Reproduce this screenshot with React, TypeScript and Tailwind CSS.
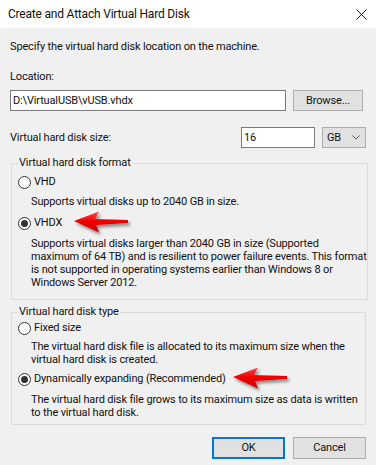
import React from 'react';

const font = "font-['Roboto',sans-serif]";

const Radio: React.FC<{ checked?: boolean; label: string }> = ({ checked = false, label }) => (
  <div className="flex items-center h-[16px] pl-[6px]">
    <span className="w-[13px] h-[13px] rounded-full border border-[#333] bg-white flex items-center justify-center">
      {checked && <span className="w-[7px] h-[7px] rounded-full bg-[#333]" />}
    </span>
    <span className="ml-[3px]">{label}</span>
  </div>
);

// red callout arrow pointing left, as drawn over the screenshot
const Arrow: React.FC<{ className: string }> = ({ className }) => (
  <svg className={className} width="64" height="30" viewBox="0 0 64 30">
    <defs>
      <linearGradient id="arrowFill" x1="0" y1="0" x2="0" y2="1">
        <stop offset="0" stopColor="#ff4a4a" />
        <stop offset="0.45" stopColor="#f20000" />
        <stop offset="1" stopColor="#c40000" />
      </linearGradient>
      <filter id="arrowShadow" x="-20%" y="-30%" width="150%" height="180%">
        <feDropShadow dx="2" dy="2.5" stdDeviation="1.6" floodColor="#000" floodOpacity="0.45" />
      </filter>
    </defs>
    <path
      d="M2 11 L27 1.5 L23 9 L56 10 L56 13 L24 15 L27 22.5 Z"
      fill="url(#arrowFill)"
      filter="url(#arrowShadow)"
    />
  </svg>
);

export default function App() {
  return (
    <div className={`w-[376px] h-[465px] overflow-hidden bg-[#f0f0f0] text-[11px] tracking-[-0.15px] leading-[16px] text-[#111] ${font}`}>
      {/* title bar */}
      <div className="h-[28px] bg-white flex items-center justify-between pl-[8px] pr-[8px] text-[12px] tracking-[-0.2px]">
        <span>Create and Attach Virtual Hard Disk</span>
        <svg width="11" height="11" viewBox="0 0 11 11" className="mr-[1px]">
          <path d="M0.5 0.5 L10.5 10.5 M10.5 0.5 L0.5 10.5" stroke="#111" strokeWidth="1" />
        </svg>
      </div>

      <div className="flex flex-col pl-[10px] pr-[10px]">
        <div className="mt-[11px]">Specify the virtual hard disk location on the machine.</div>
        <div className="mt-[14px]">Location:</div>
        <div className="mt-[5px] flex items-center">
          <div className="w-[276px] h-[21px] border border-[#7a7a7a] bg-white flex items-center px-[2px]">
            D:\VirtualUSB\vUSB.vhdx
          </div>
          <button className="ml-[7px] w-[70px] h-[21px] border border-[#adadad] bg-[#e1e1e1] flex items-center justify-center">
            Browse...
          </button>
        </div>

        <div className="mt-[16px] flex items-center h-[21px]">
          <span className="flex-1">Virtual hard disk size:</span>
          <div className="w-[74px] h-[21px] border border-[#7a7a7a] bg-white flex items-center px-[2px]">16</div>
          <div className="ml-[7px] w-[44px] h-[21px] border border-[#adadad] bg-[#e1e1e1] flex items-center justify-between pl-[4px] pr-[5px]">
            <span>GB</span>
            <svg width="8" height="5" viewBox="0 0 8 5">
              <path d="M0.5 0.5 L4 4 L7.5 0.5" fill="none" stroke="#555" strokeWidth="1" />
            </svg>
          </div>
        </div>

        <fieldset className="mt-[7px] ml-[1px] border border-[#dcdcdc] pb-[10px] leading-[13px]">
          <legend className="ml-[6px] px-[1px] leading-[16px]">Virtual hard disk format</legend>
          <div className="mt-[3px] leading-[16px]">
            <Radio label="VHD" />
          </div>
          <div className="pl-[19px] mt-[5px] whitespace-nowrap">Supports virtual disks up to 2040 GB in size.</div>
          <div className="relative mt-[7px] leading-[16px]">
            <Radio checked label="VHDX" />
            <Arrow className="absolute left-[60px] top-[-5px]" />
          </div>
          <div className="pl-[19px] mt-[6px] whitespace-nowrap">
            Supports virtual disks larger than 2040 GB in size (Supported
            <br />
            maximum of 64 TB) and is resilient to power failure events. This format
            <br />
            is not supported in operating systems earlier than Windows 8 or
            <br />
            Windows Server 2012.
          </div>
        </fieldset>

        <fieldset className="mt-[4px] ml-[1px] border border-[#dcdcdc] pb-[5px] leading-[13px]">
          <legend className="ml-[6px] px-[1px] leading-[16px]">Virtual hard disk type</legend>
          <div className="leading-[16px]">
            <Radio label="Fixed size" />
          </div>
          <div className="pl-[19px] mt-[4px] whitespace-nowrap">
            The virtual hard disk file is allocated to its maximum size when the
            <br />
            virtual hard disk is created.
          </div>
          <div className="relative mt-[5px] leading-[16px]">
            <Radio checked label="Dynamically expanding (Recommended)" />
            <Arrow className="absolute left-[219px] top-[-5px]" />
          </div>
          <div className="pl-[19px] mt-[6px] whitespace-nowrap">
            The virtual hard disk file grows to its maximum size as data is written
            <br />
            to the virtual hard disk.
          </div>
        </fieldset>

        <div className="mt-[12px] flex justify-end gap-[8px]">
          <button className="w-[73px] h-[22px] border-2 border-[#0078d7] bg-[#e1e1e1] flex items-center justify-center">
            OK
          </button>
          <button className="w-[73px] h-[22px] border border-[#adadad] bg-[#e1e1e1] flex items-center justify-center">
            Cancel
          </button>
        </div>
      </div>
    </div>
  );
}
